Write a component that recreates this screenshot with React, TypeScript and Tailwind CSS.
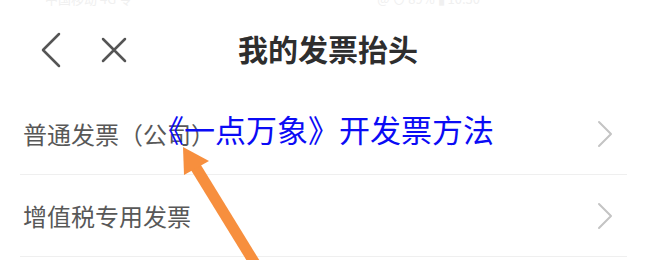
import React from 'react';

const ChevronRight: React.FC = () => (
  <svg width="16" height="28" viewBox="0 0 16 28" fill="none" className="shrink-0">
    <polyline points="2,2 14,14 2,26" stroke="#c4c4c4" strokeWidth="2" strokeLinecap="round" strokeLinejoin="round" />
  </svg>
);

const rows = ['普通发票（公司）', '增值税专用发票'];

export default function App() {
  return (
    <div className="relative w-[650px] h-[260px] overflow-hidden bg-white font-[family-name:'Noto_Sans_CJK_SC','Noto_Sans',sans-serif]">
      {/* status bar, mostly cropped away */}
      <div className="h-[6px] overflow-hidden">
        <div className="flex justify-between -mt-[11px] pl-[45px] pr-[170px] text-[13px] text-[#f0f0f0]">
          <span>中国移动 4G 令</span>
          <span>@ ⊙ 89% ▮ 10:30</span>
        </div>
      </div>

      {/* header */}
      <div className="h-[87px] flex items-center pl-[40px]">
        <svg width="22" height="36" viewBox="0 0 22 36" fill="none" className="shrink-0">
          <polyline points="19,2 3,18 19,34" stroke="#555" strokeWidth="2.5" strokeLinecap="round" strokeLinejoin="round" />
        </svg>
        <svg width="28" height="28" viewBox="0 0 28 28" fill="none" className="ml-[38px] shrink-0">
          <path d="M3 3 L25 25 M25 3 L3 25" stroke="#555" strokeWidth="2.5" strokeLinecap="round" />
        </svg>
        <span className="ml-[110px] -mt-[3px] text-[30px] leading-none font-bold text-[#2e2e2e]">我的发票抬头</span>
      </div>

      {/* list */}
      <div>
        {rows.map((label) => (
          <div
            key={label}
            className="ml-[20px] mr-[23px] h-[82px] flex items-center justify-between pl-[3px] pr-[14px] border-b border-[#efefef]"
          >
            <span className="text-[24px] leading-none text-[#585858]">{label}</span>
            <ChevronRight />
          </div>
        ))}
      </div>

      {/* overlay caption */}
      <div className="absolute left-[153px] top-[113px] text-[31px] leading-none text-[#0b0bf5] whitespace-nowrap">
        《一点万象》开发票方法
      </div>

      {/* orange pointer arrow */}
      <svg className="absolute left-0 top-0 pointer-events-none" width="650" height="260" viewBox="0 0 650 260">
        <line x1="195" y1="166" x2="262" y2="275" stroke="#f78f3e" strokeWidth="11" />
        <polygon points="183,147 209,161 184,175" fill="#f78f3e" />
      </svg>
    </div>
  );
}
